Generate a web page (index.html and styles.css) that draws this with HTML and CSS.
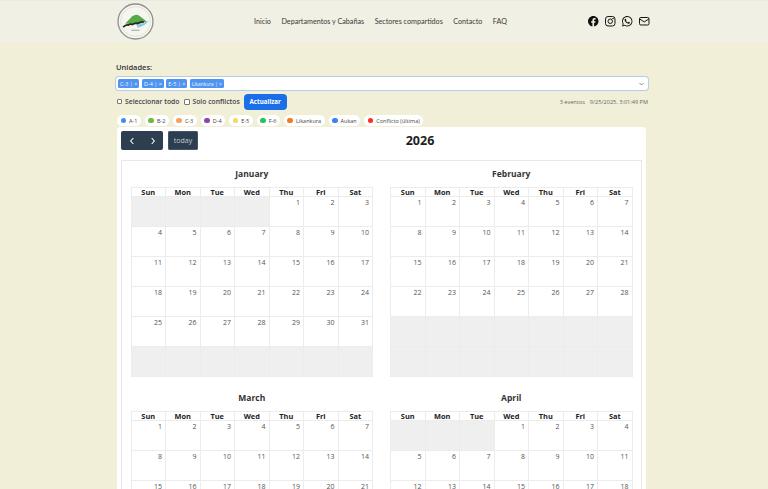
FILE: index.html
```html
<!DOCTYPE html>
<html lang="es">
<head>
    <meta charset="UTF-8">
    <meta name="viewport" content="width=device-width, initial-scale=1.0">
    <title>Calendario de Unidades</title>
    <link rel="stylesheet" href="styles.css">
</head>
<body>
    <header class="site-header">
        <svg class="logo" viewBox="0 0 36 36" aria-hidden="true">
            <circle cx="18" cy="18" r="17" fill="#f6f6f0" stroke="#8f918a" stroke-width="1.300"/>
            <circle cx="18" cy="18" r="14.500" fill="none" stroke="#d4d4cc" stroke-width="0.600"/>
            <path d="M8 20 L15 13 Q18 10.500 21 12 L29 18 L20 21 Z" fill="#58a84a"/>
            <path d="M19 21.500 Q25 20.500 31 17 Q27 23 20 24 Z" fill="#8cc6e8"/>
            <path d="M6 23.500 Q9 20.500 11 21.500 Q13 20 15 21 Q18 19 20 20 Q23 18 26 18.500" fill="none" stroke="#26261f" stroke-width="1.700"/>
            <path d="M14 26.500 H22" stroke="#8a8c84" stroke-width="0.800"/>
        </svg>
        <nav class="main-nav">
            <a href="#">Inicio</a>
            <a href="#">Departamentos y Cabañas</a>
            <a href="#">Sectores compartidos</a>
            <a href="#">Contacto</a>
            <a href="#">FAQ</a>
        </nav>
        <div class="social">
            <svg viewBox="0 0 16 16"><path d="M16 8.049c0-4.446-3.582-8.05-8-8.05C3.58 0-.002 3.603-.002 8.05c0 4.017 2.926 7.347 6.75 7.951v-5.625h-2.03V8.05H6.75V6.275c0-2.017 1.195-3.131 3.022-3.131.876 0 1.791.157 1.791.157v1.98h-1.009c-.993 0-1.303.621-1.303 1.258v1.51h2.218l-.354 2.326H9.25V16c3.824-.604 6.75-3.934 6.75-7.951z"/></svg>
            <svg viewBox="0 0 16 16" class="outline"><rect x="0.8" y="0.8" width="14.400" height="14.400" rx="3.800"/><circle cx="8" cy="8" r="3.400"/><circle cx="12.200" cy="3.800" r="0.500"/></svg>
            <svg viewBox="0 0 16 16"><path d="M13.601 2.326A7.854 7.854 0 0 0 7.994 0C3.627 0 .068 3.558.064 7.926c0 1.399.366 2.76 1.057 3.965L0 16l4.204-1.102a7.933 7.933 0 0 0 3.79.965h.004c4.368 0 7.926-3.558 7.93-7.93A7.898 7.898 0 0 0 13.6 2.326zM7.994 14.521a6.573 6.573 0 0 1-3.356-.92l-.24-.144-2.494.654.666-2.433-.156-.251a6.56 6.56 0 0 1-1.007-3.505c0-3.626 2.957-6.584 6.591-6.584a6.56 6.56 0 0 1 4.66 1.931 6.557 6.557 0 0 1 1.928 4.66c-.004 3.639-2.961 6.592-6.592 6.592zm3.615-4.934c-.197-.099-1.17-.578-1.353-.646-.182-.065-.315-.099-.445.099-.133.197-.513.646-.627.775-.114.133-.232.148-.43.05-.197-.1-.836-.308-1.592-.985-.59-.525-.985-1.175-1.103-1.372-.114-.198-.011-.304.088-.403.087-.088.197-.232.296-.346.1-.114.133-.198.198-.33.065-.134.034-.248-.015-.347-.05-.099-.445-1.076-.612-1.47-.16-.389-.323-.335-.445-.34-.114-.007-.247-.007-.38-.007a.729.729 0 0 0-.529.247c-.182.198-.691.677-.691 1.654 0 .977.71 1.916.81 2.049.098.133 1.394 2.132 3.383 2.992.47.205.84.326 1.129.418.475.152.904.129 1.246.08.38-.058 1.171-.48 1.338-.943.164-.464.164-.86.114-.943-.049-.084-.182-.133-.38-.232z"/></svg>
            <svg viewBox="0 0 16 16" class="outline"><rect x="0.8" y="2.300" width="14.400" height="11.400" rx="2"/><path d="M1 4.500 L8 9 L15 4.500"/></svg>
        </div>
    </header>

    <main class="page">
        <label class="field-label">Unidades:</label>
        <div class="multi-select">
            <span class="tag">C-3 | ×</span>
            <span class="tag">D-4 | ×</span>
            <span class="tag">E-5 | ×</span>
            <span class="tag tag-small">Likankura | ×</span>
            <svg class="chevron" viewBox="0 0 10 6"><path d="M1 1 L5 5 L9 1"/></svg>
        </div>

        <div class="controls">
            <label class="check"><input type="checkbox" class="small-check">Seleccionar todo</label>
            <label class="check"><input type="checkbox">Solo conflictos</label>
            <button class="update-btn">Actualizar</button>
            <div class="meta"><span>3 eventos</span><span>9/25/2025, 3:01:49 PM</span></div>
        </div>

        <div class="legend">
            <span class="pill"><i style="background:#3f8ef0"></i>A-1</span>
            <span class="pill"><i style="background:#6cbb3c"></i>B-2</span>
            <span class="pill"><i style="background:#f4a261"></i>C-3</span>
            <span class="pill"><i style="background:#8e44ad"></i>D-4</span>
            <span class="pill"><i style="background:#f9d65c"></i>E-5</span>
            <span class="pill"><i style="background:#22c55e"></i>F-6</span>
            <span class="pill"><i style="background:#f07c1e"></i>Likankura</span>
            <span class="pill"><i style="background:#3b82f6"></i>Aukan</span>
            <span class="pill"><i style="background:#ff2b20"></i>Conflicto (última)</span>
        </div>

        <section class="card">
            <div class="toolbar">
                <div class="toolbar-left">
                    <div class="btn-group">
                        <button class="cal-btn" aria-label="prev"><svg viewBox="0 0 8 12"><path d="M6 1.500 L2 6 L6 10.500"/></svg></button>
                        <button class="cal-btn" aria-label="next"><svg viewBox="0 0 8 12"><path d="M2 1.500 L6 6 L2 10.500"/></svg></button>
                    </div>
                    <button class="cal-btn today-btn">today</button>
                </div>
                <h2 class="year">2026</h2>
                <div></div>
            </div>
            <div class="months" id="months"></div>
        </section>
    </main>

    <script src="script.js"></script>
</body>
</html>
```

FILE: styles.css
```css
html, body {
    margin: 0;
    height: 489px;
    overflow: hidden;
}
body {
    font-family: "Open Sans", "Noto Sans", sans-serif;
    background: #f2efd9;
    color: #333;
}
.site-header {
    display: flex;
    align-items: center;
    height: 41px;
    padding-left: 117px;
    background: #f1f0e4;
    border-top: 1px solid #e9e9e6;
}
.logo {
    width: 37px;
    height: 37px;
}
.main-nav {
    display: flex;
    gap: 10.500px;
    margin-left: 100px;
    width: 317px;
    font-family: Lato, sans-serif;
    font-size: 7.200px;
}
.main-nav a {
    color: #3a3a3a;
    text-decoration: none;
    white-space: nowrap;
}
.social {
    display: flex;
    gap: 6.500px;
    margin-left: 17px;
}
.social svg {
    width: 10.500px;
    height: 10.500px;
    fill: #111;
}
.social .outline {
    fill: none;
    stroke: #111;
    stroke-width: 1.500;
}
.page {
    width: 532px;
    margin-left: 116px;
    padding-top: 20px;
}
.field-label {
    display: block;
    font-size: 7.500px;
    font-weight: 600;
    line-height: 10px;
    margin-bottom: 5px;
}
.multi-select {
    display: flex;
    align-items: center;
    gap: 2.500px;
    height: 13px;
    padding-left: 2px;
    background: white;
    border-radius: 3px;
    box-shadow: 0 0 0 1px #b5cde6;
    position: relative;
}
.tag {
    display: flex;
    align-items: center;
    height: 9px;
    padding: 0 2px;
    background: #4f94f0;
    color: #eef4ff;
    border-radius: 1.500px;
    font-size: 5.500px;
    white-space: nowrap;
}
.tag-small {
    font-size: 4.800px;
}
.chevron {
    position: absolute;
    right: 4px;
    top: 4.500px;
    width: 5px;
    height: 4px;
    fill: none;
    stroke: #555;
    stroke-width: 1.400;
}
.controls {
    display: flex;
    align-items: center;
    height: 17px;
    margin-top: 3px;
    font-size: 6.800px;
    font-weight: 600;
    color: #444;
}
.check {
    display: flex;
    align-items: center;
    margin-right: 4px;
}
.check input {
    appearance: none;
    box-sizing: border-box;
    width: 6px;
    height: 6px;
    margin: 0 2px 0 1px;
    background: white;
    border: 0.800px solid #777;
    border-radius: 1px;
}
.check input.small-check {
    width: 5px;
    height: 5px;
    margin-right: 3px;
}
.update-btn {
    width: 43px;
    height: 16px;
    padding: 0;
    border: none;
    border-radius: 4px;
    background: #1a6fe8;
    color: white;
    font-family: inherit;
    font-size: 6.200px;
    font-weight: 700;
}
.meta {
    display: flex;
    gap: 5px;
    margin-left: auto;
    font-size: 5.600px;
    font-weight: 400;
    color: #666;
}
.legend {
    display: flex;
    gap: 4px;
    margin-top: 5px;
    padding-left: 1px;
}
.pill {
    display: flex;
    align-items: center;
    gap: 3px;
    height: 11px;
    padding: 0 3.500px;
    background: white;
    border-radius: 6px;
    font-size: 5.500px;
    color: #444;
    white-space: nowrap;
}
.pill i {
    width: 5.500px;
    height: 5.500px;
    border-radius: 50%;
}
.card {
    width: 521px;
    margin: 1px 0 0 1px;
    padding: 4px;
    background: white;
    border-radius: 4px;
}
.toolbar {
    display: flex;
    justify-content: space-between;
    align-items: center;
    height: 19px;
    margin-bottom: 10px;
}
.toolbar-left {
    display: flex;
    gap: 5px;
}
.btn-group {
    display: flex;
}
.cal-btn {
    display: flex;
    align-items: center;
    justify-content: center;
    width: 21px;
    height: 19px;
    padding: 0;
    border: none;
    background: #2c3e50;
    box-shadow: inset 0 0 0 0.500px #5a6a7a;
    color: #c6ccd2;
    font-family: inherit;
    font-size: 7px;
}
.btn-group .cal-btn:first-child {
    border-radius: 2px 0 0 2px;
    box-shadow: none;
}
.btn-group .cal-btn:last-child {
    border-radius: 0 2px 2px 0;
    box-shadow: none;
}
.cal-btn svg {
    width: 6px;
    height: 8px;
    fill: none;
    stroke: white;
    stroke-width: 1.600;
}
.today-btn {
    width: 30px;
    border-radius: 2px;
}
.year {
    margin: 0;
    font-size: 12.500px;
    font-weight: 700;
    color: #212121;
}
.months {
    display: grid;
    grid-template-columns: 1fr 1fr;
    column-gap: 17px;
    row-gap: 8px;
    padding: 0 8.500px;
    border: 1px solid #e8e8e8;
}
.month-title {
    height: 26px;
    line-height: 26px;
    text-align: center;
    font-size: 8.500px;
    font-weight: 700;
    color: #333;
}
.month-table {
    width: 100%;
    border-collapse: collapse;
    table-layout: fixed;
}
.month-table th {
    box-sizing: border-box;
    height: 9px;
    padding: 0;
    border: 1px solid #ececec;
    font-size: 7.400px;
    font-weight: 700;
    line-height: 8px;
    color: #222;
}
.month-table td {
    box-sizing: border-box;
    height: 30px;
    padding: 1px 3px 0 0;
    border: 1px solid #ececec;
    vertical-align: top;
    text-align: right;
    font-size: 7px;
    line-height: 9px;
    color: #555;
}
.month-table td.other {
    background: #efefef;
}
```

FILE: script.js
```js
// Build the month grids for the year view
const monthNames = ['January', 'February', 'March', 'April'];
const dayNames = ['Sun', 'Mon', 'Tue', 'Wed', 'Thu', 'Fri', 'Sat'];
const year = 2026;

function buildMonth(index) {
    const first = new Date(year, index, 1).getDay();
    const total = new Date(year, index + 1, 0).getDate();

    let rows = '';
    for (let cell = 0; cell < 42; cell++) {
        if (cell % 7 === 0) rows += '<tr>';
        const day = cell - first + 1;
        rows += day >= 1 && day <= total ? `<td>${day}</td>` : '<td class="other"></td>';
        if (cell % 7 === 6) rows += '</tr>';
    }

    const heads = dayNames.map(name => `<th>${name}</th>`).join('');
    return `<div class="month">
        <div class="month-title">${monthNames[index]}</div>
        <table class="month-table"><thead><tr>${heads}</tr></thead><tbody>${rows}</tbody></table>
    </div>`;
}

document.getElementById('months').innerHTML = monthNames.map((name, i) => buildMonth(i)).join('');
```
